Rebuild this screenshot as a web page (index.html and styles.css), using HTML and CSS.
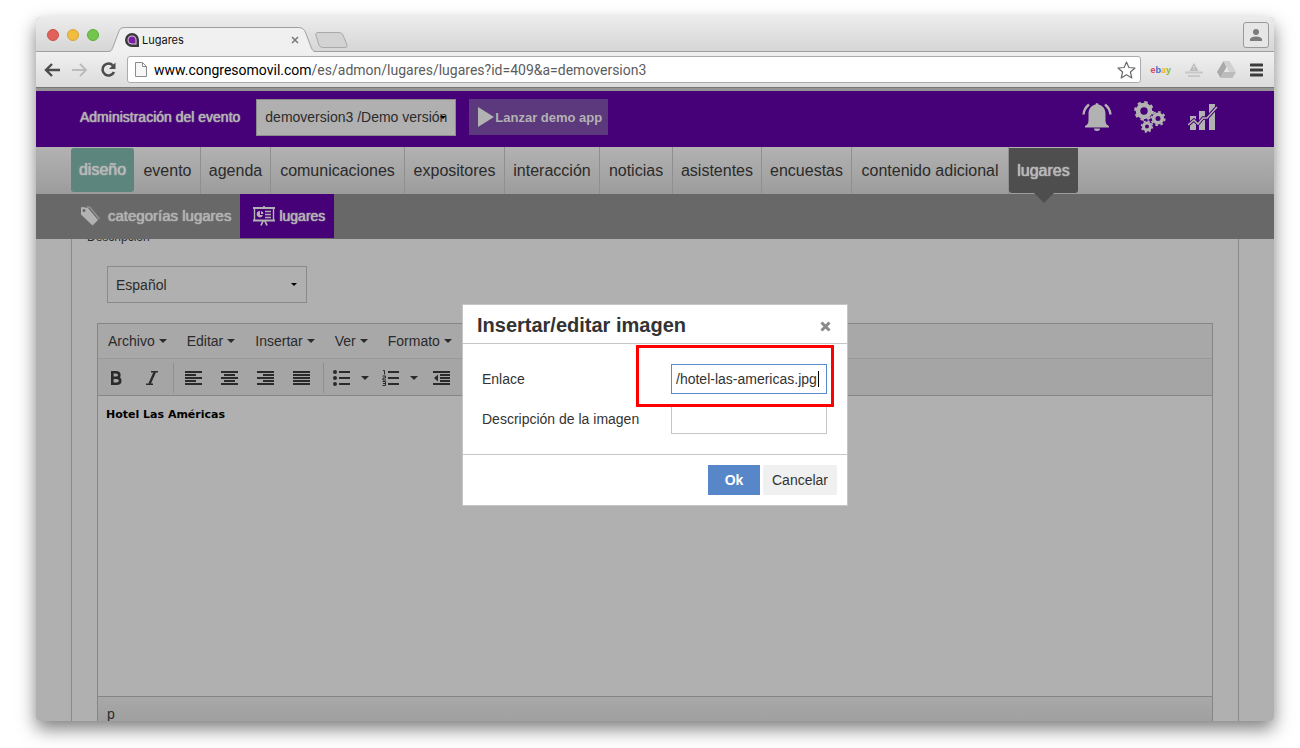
FILE: index.html
```html
<!DOCTYPE html>
<html lang="es">
<head>
<meta charset="utf-8">
<title>Lugares</title>
<link rel="stylesheet" href="styles.css">
</head>
<body>
<div class="window">
  <div class="tabstrip">
    <div class="lights"><span class="light red"></span><span class="light amber"></span><span class="light green"></span></div>
    <div class="tab">
      <svg class="tab-shape" viewBox="0 0 206 25" preserveAspectRatio="none"><path d="M0 25C3 24 3 22 4 20L10 4Q11 0.5 15 0.5H190Q194 0.5 196 4L202 20C203 23 204 24 206 25Z" fill="#f0f0f0"/><path d="M0 24.5C3 24 3 22 4 20L10 4Q11 0.5 15 0.5H190Q194 0.5 196 4L202 20C203 23 204 24 206 24.5" fill="none" stroke="#a0a0a0"/></svg>
      <svg class="favicon" width="14" height="14" viewBox="0 0 14 14"><path d="M7 0a7 7 0 0 0 0 14h7V7A7 7 0 0 0 7 0Z" fill="#3a3a3a"/><path d="M7 2.500A4.500 4.500 0 0 0 7 11.500h4.500V7A4.500 4.500 0 0 0 7 2.500Z" fill="#d9c6e6"/><path d="M7 3.500a3.500 3.500 0 0 0 0 7h3.500V7A3.500 3.500 0 0 0 7 3.500Z" fill="#7b1fa2"/></svg>
      <span class="tab-title">Lugares</span>
      <button class="icon-btn" aria-label="Cerrar pestaña"><svg width="8" height="8" viewBox="0 0 8 8"><path d="M1 1L7 7M7 1L1 7" stroke="#777" stroke-width="1.500"/></svg></button>
    </div>
    <svg class="new-tab" width="33" height="16" viewBox="0 0 33 16"><path d="M3 .5H24Q27 .5 28 3L32 13Q32.500 15.500 30 15.500H8Q5 15.500 4 13L.8 3Q.5 .5 3 .5Z" fill="#d3d3d3" stroke="#a9a9a9"/></svg>
    <button class="profile" aria-label="Perfil"><svg width="14" height="14" viewBox="0 0 14 14" fill="#7c7c7c"><circle cx="7" cy="4" r="3"/><path d="M1 13V11Q2 8.500 7 8.500T13 11V13Z"/></svg></button>
  </div>
  <div class="toolbar">
    <button class="icon-btn" aria-label="Atrás"><svg width="16" height="14" viewBox="0 0 16 14"><path d="M8 1L2 7L8 13M2 7H16" fill="none" stroke="#4c4c4c" stroke-width="2.400"/></svg></button>
    <button class="icon-btn" aria-label="Adelante"><svg width="16" height="14" viewBox="0 0 16 14"><path d="M8 1L14 7L8 13M14 7H0" fill="none" stroke="#bcbcbc" stroke-width="2"/></svg></button>
    <button class="icon-btn" aria-label="Recargar"><svg width="16" height="16" viewBox="0 0 16 16"><path d="M13 3.500A6 6 0 1 0 14 10" fill="none" stroke="#4c4c4c" stroke-width="2.600"/><path d="M15.500 .5V7H9Z" fill="#4c4c4c"/></svg></button>
    <div class="address">
      <svg width="12" height="15" viewBox="0 0 12 15"><path d="M.5 .5H7.500L11.500 4.500V14.500H.5ZM7.500 .5V4.500H11.500" fill="#f7f7f7" stroke="#8c8c8c"/></svg>
      <span class="url"><span class="host">www.congresomovil.com</span>/es/admon/lugares/lugares?id=409&amp;a=demoversion3</span>
      <svg width="19" height="18" viewBox="0 0 19 18"><path d="M9.500 1L11.900 6.500L18 7L13.400 11L14.800 17L9.500 13.800L4.200 17L5.600 11L1 7L7.100 6.500Z" fill="#fff" stroke="#6a6a6a" stroke-width="1.200" stroke-linejoin="round"/></svg>
    </div>
    <div class="extensions">
      <span class="ebay"><b class="e">e</b><b class="b">b</b><b class="a">a</b><b class="y">y</b></span>
      <svg width="18" height="16" viewBox="0 0 18 16"><path d="M9 1L13.500 9H4.500Z" fill="#bcbcbc"/><path d="M9 4V6M9 7V8" stroke="#eee"/><path d="M0 10.500H18M3 14H15" stroke="#c8c8c8" stroke-width="2"/></svg>
      <svg width="19" height="17" viewBox="0 0 19 17"><path d="M6.500 0L9.500 6L3.500 17L0 11Z" fill="#aaa"/><path d="M6.500 0H12.500L19 11H12.500Z" fill="#d0d0d0"/><path d="M6.500 11H19L15.500 17H3.500Z" fill="#bcbcbc"/></svg>
      <button class="icon-btn" aria-label="Menú"><svg width="13" height="14" viewBox="0 0 13 14"><path d="M1 2H12M1 7H12M1 12H12" stroke="#3c3c3c" stroke-width="3" stroke-linecap="round"/></svg></button>
    </div>
  </div>

  <div class="page">
    <div class="strip"></div>
    <header class="header">
      <label class="header-title" for="evento">Administración del evento</label>
      <span class="select-wrap header-select">
        <select id="evento"><option>demoversion3 /Demo versión</option></select>
        <svg class="caret" width="6" height="3" viewBox="0 0 6 3"><path d="M0 0H6L3 3Z"/></svg>
      </span>
      <button class="launch"><svg width="16" height="20" viewBox="0 0 16 20"><path d="M0 0L16 10L0 20Z" fill="#b2b2b2"/></svg>Lanzar demo app</button>
      <div class="header-icons">
        <button class="icon-btn" aria-label="Avisos"><svg width="30" height="28" viewBox="0 0 30 28"><path d="M15 0Q16.500 0 16.500 1.500C21 2.500 23.500 6 23.500 11V17C23.500 20.500 24.500 21.500 27 23.200V24.500H3V23.200C5.500 21.500 6.500 20.500 6.500 17V11C6.500 6 9 2.500 13.500 1.500Q13.500 0 15 0ZM12 25.500H18Q18 28 15 28T12 25.500Z" fill="#b2b2b2"/><path d="M1.500 11.500Q2 5.500 7 1.500M28.500 11.500Q28 5.500 23 1.500" fill="none" stroke="#b2b2b2" stroke-width="2.400"/></svg></button>
        <button class="icon-btn" aria-label="Ajustes"><svg width="32" height="32" viewBox="0 0 32 32" fill="none" stroke="#b2b2b2"><circle cx="10" cy="10" r="6" stroke-width="4.600"/><circle cx="10" cy="10" r="8.800" stroke-width="2.200" stroke-dasharray="3.456 3.456"/><circle cx="24" cy="17.500" r="4.300" stroke-width="3.600"/><circle cx="24" cy="17.500" r="6.700" stroke-width="1.800" stroke-dasharray="2.631 2.631"/><circle cx="13" cy="25.500" r="3.500" stroke-width="3"/><circle cx="13" cy="25.500" r="5.400" stroke-width="1.600" stroke-dasharray="2.121 2.121"/></svg></button>
        <button class="icon-btn" aria-label="Estadísticas"><svg width="30" height="27" viewBox="0 0 30 27"><path d="M2 12H8V26H2ZM11 7H17V26H11ZM21 0H27V26H21Z" fill="#b2b2b2"/><path d="M0 21L6 16L10 20L15 14H19L29 3" fill="none" stroke="#460078" stroke-width="3.400"/><path d="M0 21L6 16L10 20L15 14H19L29 3" fill="none" stroke="#b2b2b2" stroke-width="1.600"/></svg></button>
      </div>
    </header>
    <nav class="nav">
      <a class="design" href="#">diseño</a><a href="#">evento</a><a href="#">agenda</a><a href="#">comunicaciones</a><a href="#">expositores</a><a href="#">interacción</a><a href="#">noticias</a><a href="#">asistentes</a><a href="#">encuestas</a><a href="#">contenido adicional</a><a class="current" href="#">lugares</a>
    </nav>
    <nav class="subnav">
      <a href="#"><svg width="20" height="20" viewBox="0 0 20 20"><path d="M1 2Q1 1 2 1L8 2L18 14L12.500 19.500L1 8.500Z" fill="#b2b2b2"/><circle cx="4" cy="4.500" r="1.500" fill="#686868"/><path d="M7 .8L10 1.300L19.500 13" fill="none" stroke="#949494" stroke-width="1.400"/></svg>categorías lugares</a>
      <a class="active" href="#"><svg width="22" height="20" viewBox="0 0 22 20" fill="none" stroke="#b2b2b2"><path d="M0 2H22M0 14.500H22M11 0V2M8 19.500L10 15M14 19.500L12 15" stroke-width="1.800"/><path d="M1.500 2V14M20.500 2V14" stroke-width="1.400"/><path d="M12 5.500H18M12 8.500H18M12 11.500H18" stroke-width="1.400"/><path d="M7 5A3.200 3.200 0 1 0 10 9H7ZM8 5V8H10.500A3 3 0 0 0 8 5Z" fill="#b2b2b2" stroke="none"/></svg>lugares</a>
    </nav>
    <main class="content">
      <div class="legend">Descripción</div>
      <span class="select-wrap language">
        <select aria-label="Idioma"><option>Español</option></select>
        <svg class="caret" width="6" height="3" viewBox="0 0 6 3"><path d="M0 0H6L3 3Z"/></svg>
      </span>
      <section class="editor">
        <div class="menubar">
          <button>Archivo<i></i></button><button>Editar<i></i></button><button>Insertar<i></i></button><button>Ver<i></i></button><button>Formato<i></i></button>
        </div>
        <div class="tools">
          <button aria-label="Negrita"><svg width="16" height="16" viewBox="0 0 16 16"><path d="M4.300 2.200H8Q11.300 2.200 11.300 5T8 7.800H4.300ZM4.300 7.800H8.500Q12.200 7.800 12.200 10.800T8.500 13.800H4.300Z" fill="none" stroke="#2b2b2b" stroke-width="2.600"/></svg></button>
          <button aria-label="Cursiva"><svg width="16" height="16" viewBox="0 0 16 16"><path d="M7 1.800H14M2 14.200H9" stroke="#2b2b2b" stroke-width="1.600"/><path d="M10.800 2L5.500 14" stroke="#2b2b2b" stroke-width="2.400"/></svg></button>
          <span class="sep"></span>
          <button aria-label="Alinear a la izquierda"><svg width="18" height="16" viewBox="0 0 18 16"><path d="M0 2H17M0 5H11M0 8H17M0 11H11M0 14H17" stroke="#2b2b2b" stroke-width="2"/></svg></button>
          <button aria-label="Centrar"><svg width="18" height="16" viewBox="0 0 18 16"><path d="M0 2H17M3 5H14M0 8H17M3 11H14M0 14H17" stroke="#2b2b2b" stroke-width="2"/></svg></button>
          <button aria-label="Alinear a la derecha"><svg width="18" height="16" viewBox="0 0 18 16"><path d="M0 2H17M6 5H17M0 8H17M6 11H17M0 14H17" stroke="#2b2b2b" stroke-width="2"/></svg></button>
          <button aria-label="Justificar"><svg width="18" height="16" viewBox="0 0 18 16"><path d="M0 2H17M0 5H17M0 8H17M0 11H17M0 14H17" stroke="#2b2b2b" stroke-width="2"/></svg></button>
          <span class="sep"></span>
          <button class="split" aria-label="Lista"><svg width="18" height="16" viewBox="0 0 18 16"><path d="M6 2H17M6 8H17M6 14H17" stroke="#2b2b2b" stroke-width="2"/><g fill="#2b2b2b"><circle cx="2" cy="2" r="2"/><circle cx="2" cy="8" r="2"/><circle cx="2" cy="14" r="2"/></g></svg><i></i></button>
          <button class="split" aria-label="Lista numerada"><svg width="18" height="16" viewBox="0 0 18 16" fill="none" stroke="#2b2b2b"><path d="M6 2H17M6 8H17M6 14H17" stroke-width="2"/><path d="M1 .5H2.500V4.500M.5 6H3.500V8H1V10H4M.5 11.500H3.500V15.500H.5M1 13.500H3.500"/></svg><i></i></button>
          <button aria-label="Reducir sangría"><svg width="18" height="16" viewBox="0 0 18 16"><path d="M0 2H17M7 5H17M7 8H17M7 11H17M0 14H17" stroke="#2b2b2b" stroke-width="2"/><path d="M5 4.500V11.500L1 8Z" fill="#2b2b2b"/></svg></button>
        </div>
        <div class="document"><strong>Hotel Las Américas</strong></div>
        <div class="statusbar">p</div>
      </section>
    </main>

    <div class="overlay">
      <form class="dialog" role="dialog" aria-labelledby="dialog-title">
        <div class="dialog-head">
          <h1 id="dialog-title">Insertar/editar imagen</h1>
          <button type="button" class="icon-btn" aria-label="Cerrar"><svg width="11" height="11" viewBox="0 0 11 11"><path d="M1.500 1.500L9.500 9.500M9.500 1.500L1.500 9.500" stroke="#8a8a8a" stroke-width="3"/></svg></button>
        </div>
        <div class="dialog-body">
          <div class="row"><label for="enlace">Enlace</label><span class="field marked"><input id="enlace" class="focused" type="text" value="/hotel-las-americas.jpg"><span class="cursor"></span></span></div>
          <div class="row"><label for="desc">Descripción de la imagen</label><span class="field"><input id="desc" type="text"></span></div>
        </div>
        <div class="dialog-foot"><button type="button" class="ok">Ok</button><button type="button" class="cancel">Cancelar</button></div>
      </form>
    </div>
  </div>
</div>
</body>
</html>
```
FILE: styles.css
```css
* { box-sizing: border-box; }
body { margin: 0; padding: 17px 26px 27px 36px; min-height: 100vh; display: flex; background: #fff; font-family: "Liberation Sans", Arial, sans-serif; font-size: 14px; color: #2b2b2b; }
button, select, input { font: inherit; color: inherit; margin: 0; border-radius: 0; }
button { border: 0; padding: 0; background: none; }
a { color: inherit; text-decoration: none; }
svg { display: block; flex: none; }
.icon-btn { display: flex; align-items: center; justify-content: center; }

.window { flex: 1; min-width: 0; display: flex; flex-direction: column; overflow: hidden; border-radius: 5px; background: #b0b0b0; box-shadow: 0 8px 18px rgba(0, 0, 0, .5); }

.tabstrip { display: flex; align-items: flex-end; height: 35px; padding-right: 5px; background: linear-gradient(#ececec, #d6d6d6); border-bottom: 1px solid #a0a0a0; }
.lights { display: flex; gap: 8px; padding: 0 10px 10px 11px; }
.light { width: 12px; height: 12px; border-radius: 50%; border: 1px solid; }
.red { background: #e0625a; border-color: #cc5049; }
.amber { background: #f0bd41; border-color: #d9a532; }
.green { background: #72c64b; border-color: #5bad38; }
.tab { position: relative; display: flex; align-items: center; width: 206px; height: 25px; margin-bottom: -1px; padding: 1px 16px 0; font-family: Inter, sans-serif; font-size: 11px; color: #111; }
.tab > * { position: relative; }
.tab .tab-shape { position: absolute; left: 0; top: 0; width: 100%; height: 100%; }
.tab-title { flex: 1; padding-left: 3px; }
.new-tab { margin-bottom: 3px; }
.profile { display: flex; align-items: center; justify-content: center; width: 26px; height: 26px; margin: 0 0 3px auto; border: 1px solid #9a9a9a; border-radius: 3px; background: #e6e6e6; }

.toolbar { display: flex; align-items: center; gap: 12px; height: 36px; padding: 0 11px 0 8px; background: linear-gradient(#f0f0f0, #dcdcdc); border-bottom: 1px solid #777; }
.address { flex: 1; display: flex; align-items: center; gap: 7px; height: 27px; margin-left: -1px; padding: 0 4px 0 7px; border: 1px solid #ababab; border-radius: 3px; background: #fff; }
.url { flex: 1; font-family: Roboto, sans-serif; font-size: 14px; color: #5c5c5c; white-space: nowrap; }
.host { color: #000; }
.extensions { display: flex; align-items: center; gap: 14px; margin-left: -3px; }
.ebay { font-size: 9px; font-weight: bold; }
.ebay b { font-weight: inherit; }
.e { color: #dd4348; } .b { color: #3a6fd0; } .a { color: #f0b429; } .y { color: #8bb82a; }

.page { flex: 1; position: relative; display: flex; flex-direction: column; }
.strip { height: 3px; background: #959595; }
.header { display: flex; align-items: center; height: 56px; padding: 0 56px 4px 44px; background: #460078; color: #b2b2b2; }
.header-title, .design, .current, .subnav a { text-shadow: 0 0 1px currentColor, 0 0 1px currentColor; }
.select-wrap { position: relative; display: block; width: 200px; height: 37px; }
.select-wrap select { appearance: none; width: 100%; height: 100%; padding: 0 8px; border: 1px solid #8a8a8a; background: #b0b0b0; color: #2b2b2b; }
.caret { position: absolute; right: 10px; top: 17px; }
.header-select { margin-left: 16px; }
.launch { display: flex; align-items: center; gap: 1px; height: 36px; margin-left: 13px; padding: 0 6px 0 9px; background: #5c397c; font-size: 13px; font-weight: bold; }
.header-icons { display: flex; align-items: center; gap: 22px; margin-left: auto; }

.nav { position: relative; z-index: 2; display: grid; grid-template-columns: 64px 66px 70px 134px 100px 95px 73px 89px 90px 157px 69px; height: 47px; padding: 0 35px; background: linear-gradient(#b2b2b2, #9c9c9c); font-size: 16px; }
.nav a { display: flex; align-items: center; justify-content: center; border-right: 1px solid #8f8f8f; white-space: nowrap; }
.nav .design { margin: 1px 1px 2px 0; border: 0; border-radius: 3px; background: #5c857e; color: #b8b8b8; }
.nav .current { position: relative; margin-top: 1px; margin-bottom: 1px; border: 0; border-radius: 0 0 3px 3px; background: #4e4e4e; color: #b8b8b8; }
.current::after { content: ""; position: absolute; left: 50%; top: 100%; margin-left: -10px; border: 10px solid transparent; border-top-color: #4e4e4e; border-bottom: 0; }
.subnav { position: relative; z-index: 1; display: flex; height: 45px; padding-left: 35px; background: #686868; color: #b2b2b2; font-size: 15px; }
.subnav a { display: flex; align-items: center; gap: 8px; padding: 0 9px 2px; }
.subnav .active { gap: 4px; padding: 0 9px 0 13px; margin-bottom: 1px; background: #460078; font-size: 14px; }

.content { flex: 1; display: flex; flex-direction: column; margin: 0 35px; padding: 0 25px; border: 1px solid #8a8a8a; border-width: 0 1px; }
.legend { margin: -9px 0 0 -10px; font-size: 12px; line-height: 14px; }
.language { margin: 22px 0 20px 10px; }
.editor { flex: 1; display: flex; flex-direction: column; border: 1px solid #858585; border-bottom: 0; }
.editor i { width: 8px; border: 4px solid transparent; border-top-color: #2b2b2b; border-bottom: 0; }
.menubar { display: flex; height: 35px; background: #a8a8a8; border-bottom: 1px solid #999; }
.menubar button { display: flex; align-items: center; gap: 4px; padding: 0 10px; }
.tools { display: flex; align-items: center; height: 37px; padding-top: 2px; background: #a5a5a5; border-bottom: 1px solid #858585; }
.tools button { display: flex; align-items: center; justify-content: center; width: 36px; height: 30px; }
.tools .split { width: 49px; gap: 10px; }
.sep { width: 1px; height: 30px; margin: 0 2px 0 3px; background: #8f8f8f; }
.document { flex: 1; min-height: 300px; padding: 12px 8px; font: 11px/14px "DejaVu Sans", Verdana, sans-serif; color: #000; }
.statusbar { padding: 10px 9px 0; background: linear-gradient(#a8a8a8, #a0a0a0); border-top: 1px solid #858585; line-height: 14px; }

.overlay { position: absolute; z-index: 3; inset: 0; display: flex; justify-content: center; align-items: flex-start; padding-top: 216px; }
.dialog { width: 386px; border: 1px solid #c5c5c5; background: #fff; color: #333; }
.dialog-head { display: flex; align-items: center; justify-content: space-between; height: 39px; padding: 4px 16px 0 14px; border-bottom: 1px solid #c5c5c5; }
.dialog-head h1 { margin: 0; padding-bottom: 3px; font-size: 20px; line-height: 24px; }
.dialog-body { display: flex; flex-direction: column; gap: 10px; padding: 20px 20px 20px 19px; }
.row { display: flex; align-items: center; justify-content: space-between; height: 30px; }
.field { position: relative; width: 156px; height: 30px; }
.field input { width: 100%; height: 100%; padding: 0 4px; border: 1px solid #c5c5c5; background: #fff; outline: 0; }
.field .focused { border-color: #5b8bcf; }
.marked { z-index: 1; }
.marked::after { content: ""; position: absolute; inset: -19px -7px -13px -35px; border: 3px solid #f00; pointer-events: none; }
.cursor { position: absolute; right: 8px; top: 7px; width: 1px; height: 16px; background: #000; }
.dialog-foot { display: flex; justify-content: flex-end; gap: 3px; padding: 10px; border-top: 1px solid #c5c5c5; }
.dialog-foot button { height: 30px; }
.ok { width: 52px; background: #5786c9; color: #fff; font-weight: bold; }
.cancel { width: 74px; background: #f0f0f0; }
```
